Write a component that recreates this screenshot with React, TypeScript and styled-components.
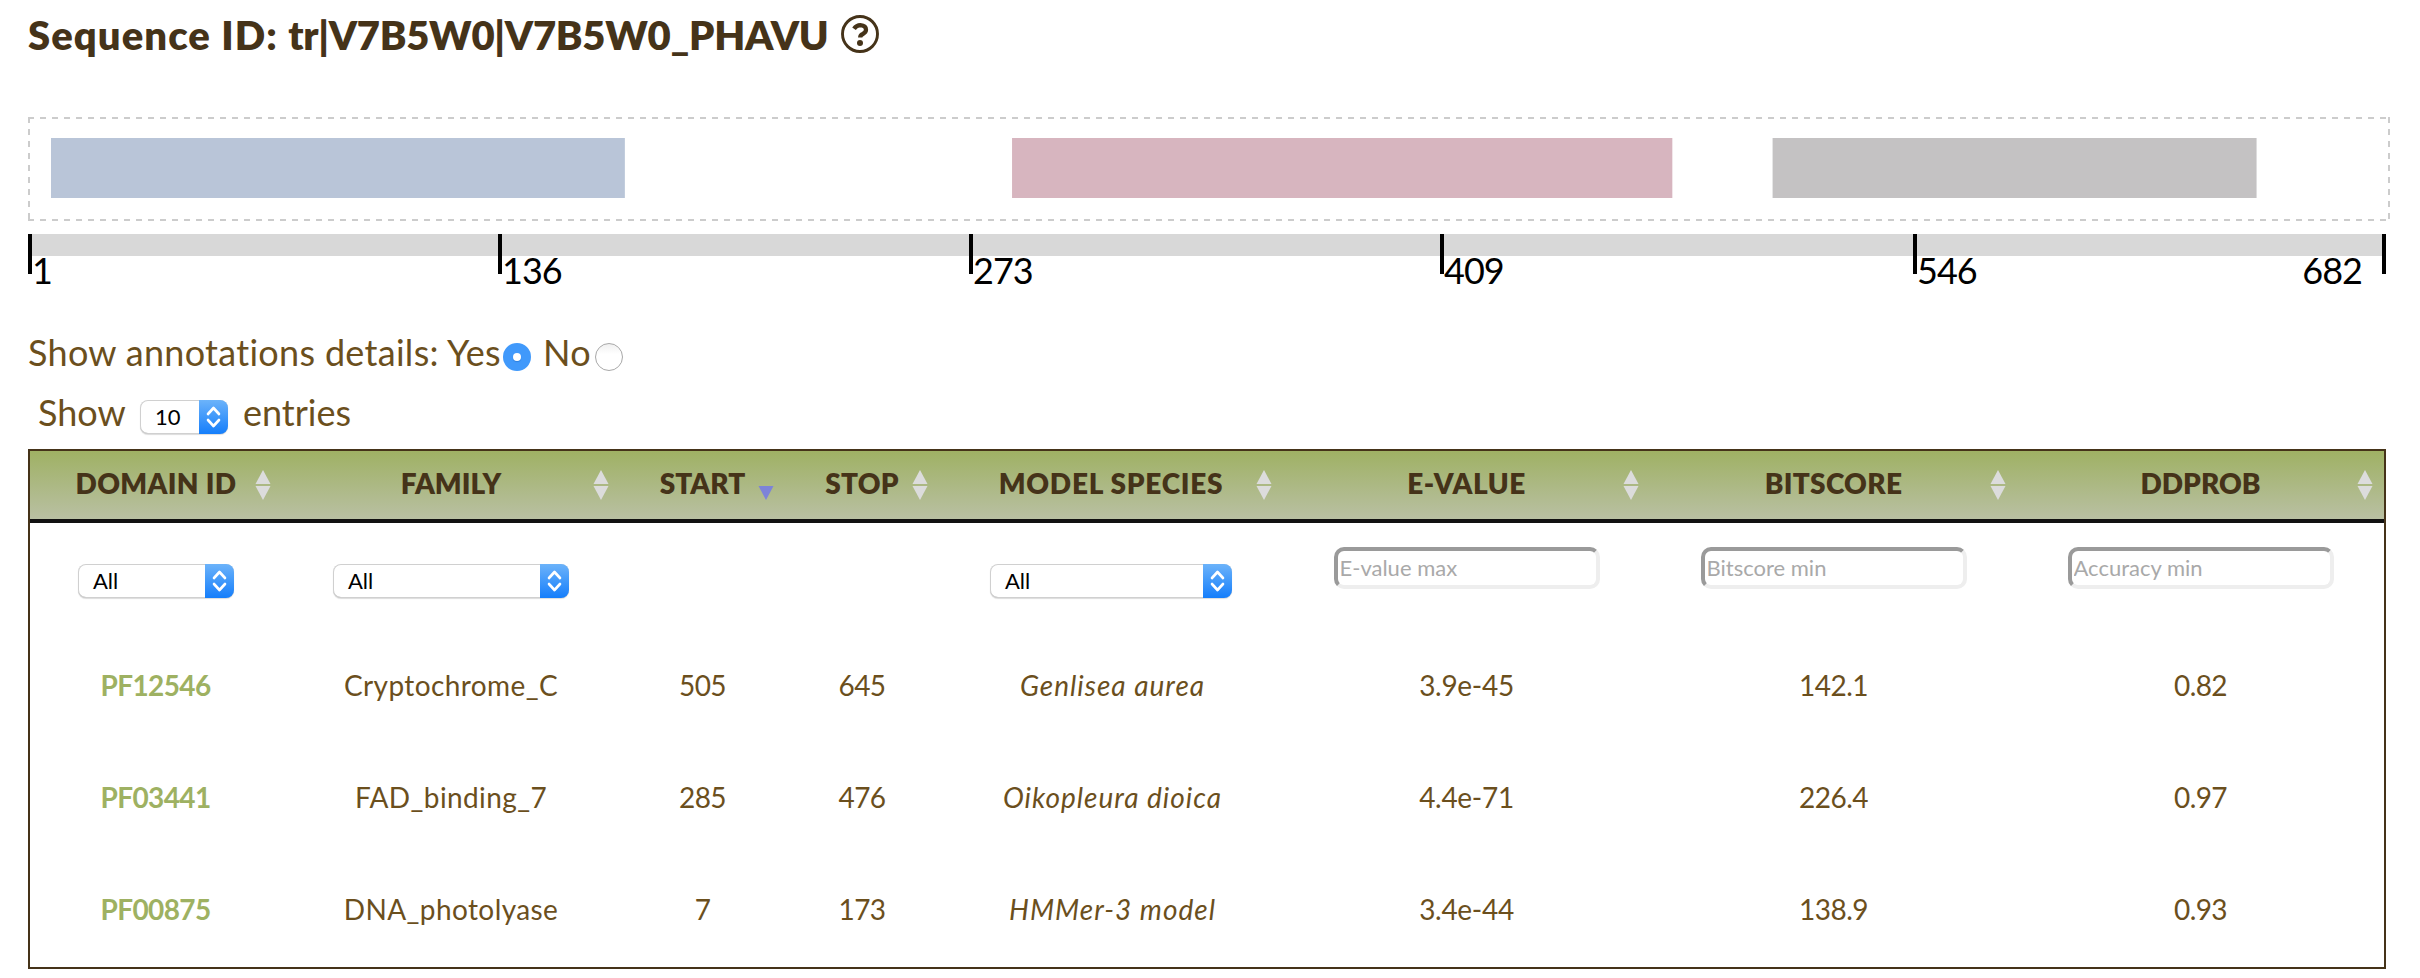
import React from "react";
import styled, { createGlobalStyle, css } from "styled-components";

const GlobalStyle = createGlobalStyle`
  *, *::before, *::after { box-sizing: border-box; }
  body {
    margin: 0;
    background: #fff;
    color: #6b4f1d;
    font-family: Lato, "Open Sans", sans-serif;
    font-size: 36px;
  }
`;

const Page = styled.main`
  display: flex;
  flex-direction: column;
  width: 2420px;
  height: 978px;
  padding: 10px 30px 9px 28px;
  overflow: hidden;
`;

const Title = styled.h1`
  display: flex;
  align-items: center;
  gap: 13px;
  height: 50px;
  margin: 0 0 57px;
  font-size: 40px;
  font-weight: 800;
  line-height: 50px;
  letter-spacing: -0.3px;
  white-space: nowrap;
  color: #453319;
`;

const TitleLabel = styled.span`
  letter-spacing: 1.05px;
`;

const HelpIcon = styled.svg`
  width: 38px;
  height: 38px;
  margin-top: -2px;
`;

const Track = styled.section`
  flex: none;
  width: 2362px;
  height: 104px;
`;

const TrackFrame = styled.svg`
  display: block;
  width: 2362px;
  height: 104px;
`;

const Axis = styled.div`
  flex: none;
  display: flex;
  width: 2358px;
  height: 40px;
  margin-top: 13px;
  background: linear-gradient(#d8d8d8 22px, transparent 22px);
`;

const Tick = styled.div<{ $w: number }>`
  flex: none;
  display: flex;
  width: ${(p) => p.$w}px;
  height: 40px;
  border-left: 4px solid #000;
  color: #000;
  font-size: 36px;
  line-height: 44px;
  letter-spacing: -1px;
`;

const TickLabel = styled.span<{ $end?: boolean }>`
  margin-top: 14px;
  ${(p) => p.$end && css`margin-left: auto; padding-right: 20px;`}
`;

const Controls = styled.div`
  flex: none;
  display: flex;
  align-items: center;
  height: 60px;
  margin-top: 48px;
  white-space: pre;
`;

const Words = styled.span<{ $w: number; $indent?: number; $track?: number }>`
  width: ${(p) => p.$w}px;
  padding-left: ${(p) => p.$indent ?? 0}px;
  letter-spacing: ${(p) => p.$track ?? 0}px;
  white-space: nowrap;
`;

const Radio = styled.span<{ $on?: boolean }>`
  display: flex;
  align-items: center;
  justify-content: center;
  width: 28px;
  height: 28px;
  margin-top: 10px;
  border-radius: 50%;
  background: ${(p) => (p.$on ? "#4099fb" : "linear-gradient(#f0f0f0, #fff 40%)")};
  border: ${(p) => (p.$on ? "none" : "1px solid #a8a8a8")};
  &::after {
    content: "";
    width: 8px;
    height: 8px;
    border-radius: 50%;
    background: ${(p) => (p.$on ? "#fff" : "transparent")};
    box-shadow: ${(p) => (p.$on ? "0 1px 1px #2c7fdd" : "none")};
  }
`;

const LengthRow = styled.div`
  flex: none;
  display: flex;
  align-items: center;
  height: 50px;
  padding-left: 10px;
  margin: 5px 0 12px;
`;

const SelectBox = styled.span<{ $w: number; $top?: number }>`
  display: flex;
  width: ${(p) => p.$w}px;
  height: 34px;
  margin-top: ${(p) => p.$top ?? 0}px;
  border-radius: 8px;
  overflow: hidden;
  background: #fff;
  box-shadow: inset 0 0 0 1px #d0d0d0, inset 0 -1px 0 #b8b8b8, 0 1px 1px #dcdcdc;
  color: #000;
  font-size: 22px;
  line-height: 34px;
`;

const SelectValue = styled.span`
  flex: 1;
  padding-left: 15px;
  text-align: left;
`;

const Arrows = styled.svg`
  width: 29px;
  height: 34px;
  background: linear-gradient(#6cb3fa, #157efb);
`;

const Table = styled.table`
  flex: none;
  width: 2358px;
  height: 520px;
  table-layout: fixed;
  border-collapse: separate;
  border-spacing: 0;
  border: 2px solid #453319;
  font-size: 28px;
  text-align: center;
`;

const HeadRow = styled.tr`
  height: 72px;
  background: linear-gradient(#9fb164, #b9c0a3 68px);
`;

const Head = styled.th`
  padding: 0;
  height: 72px;
  border-bottom: 4px solid #111;
  color: #453319;
  font-weight: 800;
`;

const HeadInner = styled.div`
  display: grid;
  grid-template-columns: 27px 1fr 27px;
  align-items: center;
  height: 68px;
  line-height: 34px;
  white-space: nowrap;
`;

const HeadText = styled.span<{ $track: number }>`
  grid-column: 2;
  justify-self: center;
  margin: -4px -10px 0;
  letter-spacing: ${(p) => p.$track}px;
`;

const SortIcon = styled.svg`
  width: 16px;
  height: 30px;
`;

const FilterCell = styled.td`
  height: 108px;
  padding: 0;
  vertical-align: top;
`;

const FilterInner = styled.div<{ $top: number }>`
  display: flex;
  justify-content: center;
  padding-top: ${(p) => p.$top}px;
`;

const FilterInput = styled.input`
  width: 266px;
  height: 42px;
  padding: 0 2px 2px;
  border: 4px solid;
  border-color: #9a9a9a #eee #eee #9a9a9a;
  border-radius: 10px;
  font: 22px Lato, sans-serif;
  background: #fff;
  &::placeholder { color: #a9a9a9; opacity: 1; }
`;

const Cell = styled.td<{ $track: number; $kind?: "id" | "species" }>`
  height: 112px;
  padding: 0 0 5px;
  white-space: nowrap;
  letter-spacing: ${(p) => p.$track}px;
  ${(p) => p.$kind === "id" && css`color: #9eb162; font-weight: 700; padding-right: 1px;`}
  ${(p) => p.$kind === "species" && css`font-style: italic; padding-left: 3px;`}
`;

const domains = [
  { start: 7, stop: 173, color: "#b9c5d8" },
  { start: 285, stop: 476, color: "#d7b5bf" },
  { start: 505, stop: 645, color: "#c4c2c3" },
];

const perResidue = 3.457;

const ticks = [
  { label: "1", width: 470 },
  { label: "136", width: 471 },
  { label: "273", width: 471 },
  { label: "409", width: 473 },
  { label: "546", width: 469, end: "682" },
  { label: "", width: 4 },
];

const columns = [
  { label: "DOMAIN ID", width: 252, track: 0.35, select: 156 },
  { label: "FAMILY", width: 338, track: 0, select: 236 },
  { label: "START", width: 165, track: 0, sorted: true },
  { label: "STOP", width: 154, track: 0.2 },
  { label: "MODEL SPECIES", width: 344, track: 0.75, select: 242 },
  { label: "E-VALUE", width: 367, track: 0.5, input: "E-value max" },
  { label: "BITSCORE", width: 367, track: 0.3, input: "Bitscore min" },
  { label: "DDPROB", width: 367, track: 0, input: "Accuracy min" },
];

const rows = [
  ["PF12546", "Cryptochrome_C", "505", "645", "Genlisea aurea", "3.9e-45", "142.1", "0.82"],
  ["PF03441", "FAD_binding_7", "285", "476", "Oikopleura dioica", "4.4e-71", "226.4", "0.97"],
  ["PF00875", "DNA_photolyase", "7", "173", "HMMer-3 model", "3.4e-44", "138.9", "0.93"],
];

const cellTrack = [-0.6, 0.4, -0.6, -0.6, 1, -0.3, -0.5, -0.6];

function Select({ value, width, top }: { value: string; width: number; top?: number }) {
  return (
    <SelectBox $w={width} $top={top}>
      <SelectValue>{value}</SelectValue>
      <Arrows viewBox="0 0 29 34" fill="none" stroke="#fff" strokeWidth="2.6" strokeLinecap="round" strokeLinejoin="round">
        <path d="M9 14l5.500-6 5.500 6M9 20l5.500 6 5.500-6" />
      </Arrows>
    </SelectBox>
  );
}

function Sort({ sorted }: { sorted?: boolean }) {
  return (
    <SortIcon viewBox="0 0 16 30" fill={sorted ? "#7d83d8" : "#dcdcdc"}>
      {!sorted && <path d="M8 0l7.500 14h-15z" />}
      <path d="M8 30l7.500-14h-15z" />
    </SortIcon>
  );
}

export default function App() {
  return (
    <Page>
      <GlobalStyle />
      <Title>
        <span><TitleLabel>Sequence ID: </TitleLabel>tr|V7B5W0|V7B5W0_PHAVU</span>
        <HelpIcon viewBox="0 0 38 38" fill="none" stroke="#453319">
          <circle cx="19" cy="19" r="17.500" strokeWidth="2.900" />
          <path d="M13 13.800q2.500-3.600 6.300-3.600 5.700 0.500 5.700 4.600 0 2.500-3.200 4.200-2.600 1.300-2.600 3.600" strokeWidth="4.300" />
          <circle cx="19" cy="28" r="3" fill="#453319" stroke="none" />
        </HelpIcon>
      </Title>
      <Track>
        <TrackFrame viewBox="0 0 2362 104">
          <path d="M0 1H2362M0 103H2362M1 0V104M2361 0V104" stroke="#ccc" strokeWidth="2" strokeDasharray="6 6" />
          {domains.map((d) => (
            <rect
              key={d.start}
              x={d.start * perResidue - 1.200}
              y="21"
              width={(d.stop - d.start) * perResidue}
              height="60"
              fill={d.color}
            />
          ))}
        </TrackFrame>
      </Track>
      <Axis>
        {ticks.map((t) => (
          <Tick key={t.label} $w={t.width}>
            <TickLabel>{t.label}</TickLabel>
            {t.end && <TickLabel $end>{t.end}</TickLabel>}
          </Tick>
        ))}
      </Axis>
      <Controls>
        <Words $w={475} $track={0.3}>Show annotations details: Yes</Words>
        <Radio $on />
        <Words $w={64} $indent={12} $track={0.3}>No</Words>
        <Radio />
      </Controls>
      <LengthRow>
        <Words $w={102}>Show</Words>
        <Select value="10" width={88} top={10} />
        <Words $w={130} $indent={15}>entries</Words>
      </LengthRow>
      <Table>
        <colgroup>
          {columns.map((c) => <col key={c.label} width={c.width} />)}
        </colgroup>
        <thead>
          <HeadRow>
            {columns.map((c) => (
              <Head key={c.label}>
                <HeadInner>
                  <HeadText $track={c.track}>{c.label}</HeadText>
                  <Sort sorted={c.sorted} />
                </HeadInner>
              </Head>
            ))}
          </HeadRow>
        </thead>
        <tbody>
          <tr>
            {columns.map((c) => (
              <FilterCell key={c.label}>
                <FilterInner $top={c.input ? 24 : 41}>
                  {c.select && <Select value="All" width={c.select} />}
                  {c.input && <FilterInput placeholder={c.input} />}
                </FilterInner>
              </FilterCell>
            ))}
          </tr>
          {rows.map((r) => (
            <tr key={r[0]}>
              {r.map((v, i) => (
                <Cell key={i} $track={cellTrack[i]} $kind={i === 0 ? "id" : i === 4 ? "species" : undefined}>{v}</Cell>
              ))}
            </tr>
          ))}
        </tbody>
      </Table>
    </Page>
  );
}
